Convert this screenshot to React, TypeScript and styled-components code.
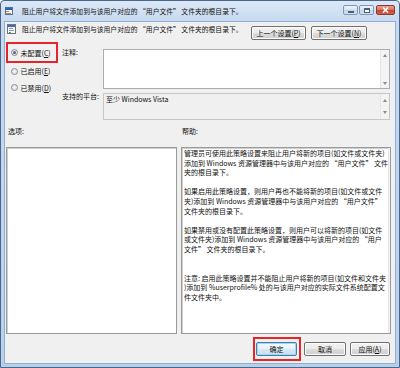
import styled, { createGlobalStyle } from "styled-components";

const GlobalStyle = createGlobalStyle`
  html, body {
    margin: 0;
    padding: 0;
    background: #ffffff;
  }
  body {
    font-family: "Noto Sans CJK SC", "Noto Sans", sans-serif;
    font-size: 7px;
    color: #111;
  }
  * {
    box-sizing: border-box;
  }
`;

const TITLE = "阻止用户将文件添加到与该用户对应的 “用户文件” 文件夹的根目录下。";

const HELP = [
    [
        "管理员可使用此策略设置来阻止用户将新的项目(如文件或文件夹)",
        "添加到 Windows 资源管理器中与该用户对应的 “用户文件” 文件",
        "夹的根目录下。",
    ],
    [
        "如果启用此策略设置，则用户再也不能将新的项目(如文件或文件",
        "夹)添加到 Windows 资源管理器中与该用户对应的 “用户文件”",
        "文件夹的根目录下。",
    ],
    [
        "如果禁用或没有配置此策略设置，则用户可以将新的项目(如文件",
        "或文件夹)添加到 Windows 资源管理器中与该用户对应的 “用户",
        "文件” 文件夹的根目录下。",
    ],
    [
        "注意: 启用此策略设置并不能阻止用户将新的项目(如文件和文件夹",
        ")添加到 %userprofile% 处的与该用户对应的实际文件系统配置文",
        "件文件夹中。",
    ],
];

export default function App() {
    return (
        <>
            <GlobalStyle />
            <Window>
                <TitleBar>
                    <TitleIcon />
                    <TitleText>{TITLE}</TitleText>
                    <CaptionButtons>
                        <CaptionButton>
                            <MinGlyph />
                        </CaptionButton>
                        <CaptionButton>
                            <MaxGlyph />
                        </CaptionButton>
                        <CloseButton>
                            <CloseGlyph />
                        </CloseButton>
                    </CaptionButtons>
                </TitleBar>
                <Client>
                    <HeaderRow>
                        <PolicyIcon />
                        <HeaderText>{TITLE}</HeaderText>
                        <HeaderButtons>
                            <Button $w={55}>上一个设置(<u>P</u>)</Button>
                            <Button $w={56}>下一个设置(<u>N</u>)</Button>
                        </HeaderButtons>
                    </HeaderRow>

                    <SettingsRow>
                        <RadioColumn>
                            <Highlight>
                                <RadioItem $boxed>
                                    <Radio $checked />
                                    <span>未配置(<u>C</u>)</span>
                                </RadioItem>
                            </Highlight>
                            <RadioItem>
                                <Radio />
                                <span>已启用(<u>E</u>)</span>
                            </RadioItem>
                            <RadioItem>
                                <Radio />
                                <span>已禁用(<u>D</u>)</span>
                            </RadioItem>
                        </RadioColumn>
                        <FieldGrid>
                            <FieldLabel>注释:</FieldLabel>
                            <TextBox $h={40}>
                                <TextArea />
                                <ScrollColumn $pad="4px 0 3px">
                                    <ArrowUp />
                                    <ArrowDown />
                                </ScrollColumn>
                            </TextBox>
                            <FieldLabel>支持的平台:</FieldLabel>
                            <TextBox $h={27} $readOnly>
                                <PlatformText>至少 Windows Vista</PlatformText>
                                <ScrollColumn $pad="5px 0 5px">
                                    <ArrowUp />
                                    <ArrowDown />
                                </ScrollColumn>
                            </TextBox>
                        </FieldGrid>
                    </SettingsRow>

                    <LabelsRow>
                        <SectionLabel $indent={2}>选项:</SectionLabel>
                        <SectionLabel $indent={1}>帮助:</SectionLabel>
                    </LabelsRow>

                    <PanelsRow>
                        <ListBox />
                        <ListBox>
                            <HelpText>
                                {HELP.map((lines, i) => (
                                    <Paragraph key={i} $extra={i === 3}>
                                        {lines.map((l, j) => (
                                            <Line key={j}>{l}</Line>
                                        ))}
                                    </Paragraph>
                                ))}
                            </HelpText>
                            <ScrollColumn $pad="4px 0 3px">
                                <ArrowUp />
                                <ArrowDown />
                            </ScrollColumn>
                        </ListBox>
                    </PanelsRow>

                    <Footer>
                        <Highlight $pad="3px 2px 3px 1px">
                            <Button $w={41} $default>确定</Button>
                        </Highlight>
                        <Button $w={42}>取消</Button>
                        <Button $w={40}>应用(<u>A</u>)</Button>
                    </Footer>
                </Client>
            </Window>
        </>
    );
}

/* little drawings */

const TitleIcon = () => (
    <svg width="8" height="8" viewBox="0 0 8 8" style={{ flex: "none" }}>
        <rect x="0.5" y="0.5" width="7" height="7" fill="#f4f7fb" stroke="#5a6f8c" />
        <rect x="1" y="1" width="6" height="2" fill="#2f62b5" />
        <rect x="1" y="4" width="3" height="1" fill="#7d93b3" />
        <rect x="1" y="6" width="5" height="1" fill="#c8862a" />
    </svg>
);

const PolicyIcon = () => (
    <svg width="9" height="10" viewBox="0 0 9 10" style={{ flex: "none", marginTop: 1 }}>
        <rect x="0.5" y="0.5" width="8" height="9" fill="#f7f7f7" stroke="#6c7480" />
        <rect x="1" y="1" width="7" height="2" fill="#3b6fc0" />
        <rect x="2" y="4" width="4" height="1" fill="#8a9ab0" />
        <rect x="2" y="6" width="5" height="1" fill="#8a9ab0" />
        <rect x="2" y="8" width="2" height="1" fill="#5aa04a" />
    </svg>
);

const CloseGlyph = () => (
    <svg width="7" height="6" viewBox="0 0 7 6">
        <path d="M1 0.5 L6 5.5 M6 0.5 L1 5.5" stroke="#fff" strokeWidth="1.6" />
    </svg>
);

/* frame */

const Window = styled.div`
    width: 400px;
    height: 368px;
    display: flex;
    flex-direction: column;
    border: 1px solid #4b6788;
    border-radius: 4px 4px 0 0;
    background: linear-gradient(180deg, #dce8f6 0px, #c7daf0 20px, #b9d0ea 100%);
`;

const TitleBar = styled.div`
    height: 20px;
    display: flex;
    align-items: center;
    padding: 0 0 0 4px;
`;

const TitleText = styled.span`
    margin-left: 9px;
    white-space: nowrap;
    font-size: 6.8px;
    line-height: 10px;
    color: #111;
`;

const CaptionButtons = styled.div`
    margin-left: auto;
    align-self: flex-start;
    margin-top: 4px;
    margin-right: 4px;
    display: flex;
    gap: 1px;
`;

const CaptionButton = styled.div`
    width: 15px;
    height: 10px;
    border: 1px solid #7f97b6;
    border-radius: 2px;
    background: linear-gradient(180deg, #eef3f9 0%, #d6e2f0 50%, #c3d3e8 51%, #d3e1f1 100%);
    display: flex;
    align-items: center;
    justify-content: center;
`;

const CloseButton = styled(CaptionButton)`
    width: 19px;
    margin-left: 1px;
    border-color: #8a3a30;
    background: linear-gradient(180deg, #e8a493 0%, #d8705a 50%, #c7452e 51%, #d2624a 100%);
`;

const MinGlyph = styled.div`
    width: 6px;
    height: 2px;
    margin-top: 3px;
    background: #fff;
    border: 0.5px solid #4a5e78;
`;

const MaxGlyph = styled.div`
    width: 6px;
    height: 5px;
    border: 1px solid #4a5e78;
    border-top-width: 2px;
    background: #fff;
`;

const Client = styled.div`
    flex: 1;
    margin: 0 3px 3px 3px;
    border: 1px solid #8eaed6;
    background: #f0f0f0;
    display: flex;
    flex-direction: column;
`;

/* header */

const HeaderRow = styled.div`
    height: 20px;
    display: flex;
    align-items: flex-start;
    padding: 1px 28px 0 2px;
`;

const HeaderText = styled.span`
    margin-left: 6px;
    margin-top: 1px;
    font-size: 6.8px;
    line-height: 10px;
    white-space: nowrap;
`;

const HeaderButtons = styled.div`
    margin-left: auto;
    margin-top: 3px;
    display: flex;
    gap: 5px;
`;

const Button = styled.button<{ $w: number; $default?: boolean }>`
    width: ${(p) => p.$w}px;
    height: 14px;
    padding: 0;
    font: inherit;
    font-size: 7px;
    line-height: 12px;
    color: #111;
    text-align: center;
    white-space: nowrap;
    border: 1px solid ${(p) => (p.$default ? "#3c7fb1" : "#707070")};
    border-radius: 2px;
    background: ${(p) =>
        p.$default
            ? "linear-gradient(180deg, #f4f9fd 0%, #e6f1fa 50%, #d7e8f5 51%, #c9dff0 100%)"
            : "linear-gradient(180deg, #f2f2f2 0%, #ebebeb 50%, #dddddd 51%, #cfcfcf 100%)"};
    box-shadow: inset 0 0 0 1px ${(p) => (p.$default ? "#a9d4f0" : "#fcfcfc")};

    u {
        text-underline-offset: 1px;
    }
`;

/* settings */

const SettingsRow = styled.div`
    height: 78px;
    display: flex;
    padding: 0 5px 0 1px;
`;

const RadioColumn = styled.div`
    width: 52px;
    flex: none;
    display: flex;
    flex-direction: column;
`;

const Highlight = styled.div<{ $pad?: string }>`
    border: 2px solid #e4262b;
    padding: ${(p) => p.$pad ?? "0"};
`;

const RadioItem = styled.label<{ $boxed?: boolean }>`
    height: ${(p) => (p.$boxed ? 17 : 16.5)}px;
    display: flex;
    align-items: center;
    gap: 2.5px;
    padding-left: ${(p) => (p.$boxed ? 3 : 5)}px;
    white-space: nowrap;
    line-height: 10px;
`;

const Radio = styled.span<{ $checked?: boolean }>`
    width: 7px;
    height: 7px;
    flex: none;
    border-radius: 50%;
    border: 1px solid #8a8c8e;
    background: radial-gradient(circle at 50% 50%, #f6f6f6 0%, #dcdde0 100%);
    position: relative;

    &::after {
        content: "";
        display: ${(p) => (p.$checked ? "block" : "none")};
        position: absolute;
        inset: 1px;
        border-radius: 50%;
        background: radial-gradient(circle at 40% 40%, #6c86a8 0%, #223a5c 100%);
    }
`;

const FieldGrid = styled.div`
    flex: 1;
    margin-left: 4px;
    padding-top: 7px;
    display: grid;
    grid-template-columns: 41px 1fr;
    grid-auto-rows: min-content;
    row-gap: 4px;
`;

const FieldLabel = styled.span`
    line-height: 10px;
    margin-top: -2px;
    white-space: nowrap;
`;

const TextBox = styled.div<{ $h: number; $readOnly?: boolean }>`
    height: ${(p) => p.$h}px;
    display: flex;
    border: 1px solid ${(p) => (p.$readOnly ? "#c6c6c6" : "#abadb3")};
    background: ${(p) => (p.$readOnly ? "#f0f0f0" : "#ffffff")};
`;

const TextArea = styled.div`
    flex: 1;
`;

const PlatformText = styled.div`
    flex: 1;
    padding: 0 2px;
    line-height: 10px;
    white-space: nowrap;
`;

const ScrollColumn = styled.div<{ $pad: string }>`
    width: 9px;
    flex: none;
    display: flex;
    flex-direction: column;
    justify-content: space-between;
    align-items: center;
    padding: ${(p) => p.$pad};
    background: #f3f3f3;
    border-left: 1px solid #e6e6e6;
`;

const ArrowUp = styled.span`
    width: 0;
    height: 0;
    border-left: 2.5px solid transparent;
    border-right: 2.5px solid transparent;
    border-bottom: 3px solid #8a8a8a;
`;

const ArrowDown = styled(ArrowUp)`
    border-bottom: none;
    border-top: 3px solid #8a8a8a;
`;

/* lower part */

const LabelsRow = styled.div`
    height: 27px;
    display: grid;
    grid-template-columns: 171px 1fr;
    column-gap: 4px;
    padding: 6px 5px 0 1px;
`;

const SectionLabel = styled.span<{ $indent: number }>`
    padding-left: ${(p) => p.$indent}px;
    line-height: 10px;
`;

const PanelsRow = styled.div`
    height: 187px;
    display: grid;
    grid-template-columns: 171px 1fr;
    column-gap: 4px;
    padding: 0 4px 0 1px;
`;

const ListBox = styled.div`
    display: flex;
    background: #ffffff;
    border: 1px solid #9a9a9a;
    box-shadow: inset 1px 1px 0 #cfcfcf;
    overflow: hidden;
`;

const HelpText = styled.div`
    flex: 1;
    padding: 1px 0 0 2px;
    line-height: 9.6px;
`;

const Paragraph = styled.div<{ $extra?: boolean }>`
    margin-top: ${(p) => (p.$extra ? 19.2 : 0)}px;
    margin-bottom: 9.6px;
`;

const Line = styled.div`
    white-space: nowrap;
`;

const Footer = styled.div`
    flex: 1;
    display: flex;
    justify-content: flex-end;
    align-items: center;
    gap: 4px;
    padding: 3px 5px 2px 0;

    & > :first-child {
        margin-right: -1px;
    }
`;
